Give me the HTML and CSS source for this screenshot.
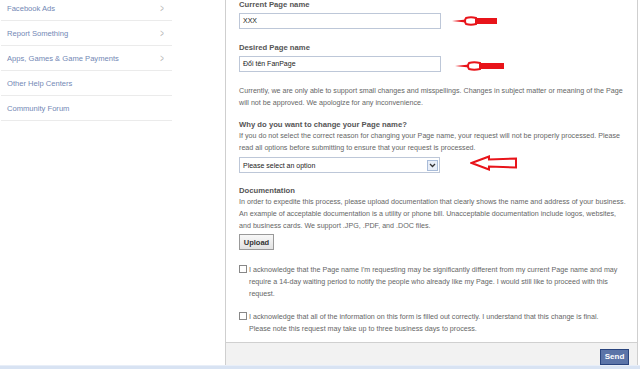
FILE: index.html
```html
<!DOCTYPE html>
<html>
<head>
<meta charset="utf-8">
<link rel="stylesheet" href="styles.css">
</head>
<body>
<div class="page">
  <aside class="sidebar">
    <ul class="nav">
      <li class="nav-item"><span>Facebook Ads</span><span class="chev">&gt;</span></li>
      <li class="nav-item"><span>Report Something</span><span class="chev">&gt;</span></li>
      <li class="nav-item"><span>Apps, Games &amp; Game Payments</span><span class="chev">&gt;</span></li>
      <li class="nav-item"><span>Other Help Centers</span></li>
      <li class="nav-item"><span>Community Forum</span></li>
    </ul>
  </aside>
  <main class="main">
    <form class="form">
      <div class="label">Current Page name</div>
      <div class="field">
        <div class="input">XXX</div>
        <svg class="arrow arrow-1" width="50" height="10" viewBox="0 0 50 10">
          <path d="M0 5 L14 3.5 L15 5 L14 6.5 Z" fill="#e8141a"/>
          <path d="M14 2 Q19 0.5 24 2 L24 8 Q19 9.5 14 8 Q12 5 14 2 Z" fill="#fff" stroke="#e8141a" stroke-width="2"/>
          <rect x="24" y="2" width="21" height="6" fill="#e8141a"/>
        </svg>
      </div>
      <div class="label label-gap">Desired Page name</div>
      <div class="field">
        <div class="input">Đổi tên FanPage</div>
        <svg class="arrow arrow-2" width="52" height="10" viewBox="0 0 52 10">
          <path d="M0 5 L14 3.5 L15 5 L14 6.5 Z" fill="#e8141a"/>
          <path d="M14 2 Q19 0.5 25 2 L25 8 Q19 9.5 14 8 Q12 5 14 2 Z" fill="#fff" stroke="#e8141a" stroke-width="2"/>
          <rect x="25" y="2" width="24" height="6" fill="#e8141a"/>
        </svg>
      </div>
      <p class="text p-gap">Currently, we are only able to support small changes and misspellings. Changes in subject matter or meaning of the Page will not be approved. We apologize for any inconvenience.</p>
      <div class="label label-gap2">Why do you want to change your Page name?</div>
      <p class="text">If you do not select the correct reason for changing your Page name, your request will not be properly processed. Please read all options before submitting to ensure that your request is processed.</p>
      <div class="field">
        <div class="select"><span>Please select an option</span><span class="sel-btn"><svg width="7" height="5" viewBox="0 0 7 5"><path d="M1 1 L3.5 3.5 L6 1" fill="none" stroke="#333" stroke-width="1.3"/></svg></span></div>
        <svg class="arrow arrow-3" width="50" height="18" viewBox="0 0 50 18">
          <path d="M1.5 8 L19 1.5 L19 4.5 L46 3.5 L46 12.5 L19 11.5 L19 14.5 Z" fill="#fff" stroke="#e8141a" stroke-width="2" stroke-linejoin="miter"/>
        </svg>
      </div>
      <div class="label label-gap3">Documentation</div>
      <p class="text">In order to expedite this process, please upload documentation that clearly shows the name and address of your business. An example of acceptable documentation is a utility or phone bill. Unacceptable documentation include logos, websites, and business cards. We support .JPG, .PDF, and .DOC files.</p>
      <button type="button" class="upload">Upload</button>
      <label class="check check-1"><span class="box"></span><span class="check-text">I acknowledge that the Page name I'm requesting may be significantly different from my current Page name and may require a 14-day waiting period to notify the people who already like my Page. I would still like to proceed with this request.</span></label>
      <label class="check check-2"><span class="box"></span><span class="check-text">I acknowledge that all of the information on this form is filled out correctly. I understand that this change is final. Please note this request may take up to three business days to process.</span></label>
    </form>
    <div class="footer"><button type="button" class="send">Send</button></div>
  </main>
  <div class="edge"></div>
</div>
<div class="strip"></div>
</body>
</html>
```

FILE: styles.css
```css
html, body {
  margin: 0;
  padding: 0;
  background: #fff;
  font-family: "Liberation Sans", Arial, sans-serif;
}
.page {
  display: flex;
  height: 365px;
}
.sidebar {
  width: 225px;
  flex: none;
}
.nav {
  list-style: none;
  margin: -4px 0 0 0;
  padding: 0 0 0 1px;
  width: 171px;
}
.nav-item {
  display: flex;
  justify-content: space-between;
  align-items: center;
  height: 24px;
  padding: 0 7px 0 6px;
  border-bottom: 1px solid #ebebeb;
  font-size: 7.6px;
  color: #7388b5;
}
.chev {
  color: #b5b5b5;
  font-size: 10px;
  transform: scaleX(0.6);
}
.main {
  width: 411px;
  flex: none;
  border-left: 1px solid #cfcfcf;
  border-right: 1px solid #cfcfcf;
  display: flex;
  flex-direction: column;
}
.edge {
  flex: 1;
}
.form {
  flex: 1;
  padding: 0 11px 0 13px;
}
.label {
  font-weight: bold;
  font-size: 7.7px;
  line-height: 10px;
  color: #555;
}
.label-gap { margin-top: 14px; }
.label-gap2 { margin-top: 11px; }
.label-gap3 { margin-top: 13px; }
.field {
  position: relative;
  margin-top: 3px;
}
.input {
  box-sizing: border-box;
  width: 202px;
  height: 16px;
  border: 1px solid #bdc7d8;
  padding: 0 3px;
  font-size: 7px;
  line-height: 14px;
  color: #222;
}
.text {
  margin: 0;
  font-size: 7.15px;
  line-height: 12px;
  color: #666;
}
.p-gap { margin-top: 13px; }
.select {
  box-sizing: border-box;
  width: 201px;
  height: 16px;
  border: 1px solid #bdc7d8;
  padding: 0 1px 0 3px;
  display: flex;
  align-items: center;
  justify-content: space-between;
  font-size: 7px;
  color: #222;
}
.sel-btn {
  box-sizing: border-box;
  width: 11px;
  height: 11px;
  border: 1px solid #a9bcd9;
  background: #e8eef8;
  display: flex;
  align-items: center;
  justify-content: center;
}
.arrow {
  position: absolute;
}
.arrow-1 { left: 213px; top: 3px; }
.arrow-2 { left: 216px; top: 5px; }
.arrow-3 { left: 231px; top: -2px; }
.upload {
  display: block;
  margin-top: 2px;
  box-sizing: border-box;
  width: 35px;
  height: 16px;
  padding: 0;
  border: 1px solid #999;
  background: linear-gradient(#f8f8f8, #e2e2e2);
  font-family: "Liberation Sans", Arial, sans-serif;
  font-weight: bold;
  font-size: 7.5px;
  color: #333;
}
.check {
  display: flex;
  align-items: flex-start;
  font-size: 7.15px;
  line-height: 12px;
  color: #666;
  padding-right: 4px;
}
.check-1 { margin-top: 14px; }
.check-2 { margin-top: 11px; }
.box {
  flex: none;
  box-sizing: border-box;
  width: 8px;
  height: 8px;
  border: 1px solid #888;
  margin: 1px 2px 0 0;
  background: #fff;
}
.footer {
  height: 22px;
  border-top: 1px solid #d0d0d0;
  background: #f2f2f2;
  display: flex;
  justify-content: flex-end;
  align-items: center;
  padding-right: 8px;
}
.send {
  box-sizing: border-box;
  width: 29px;
  height: 16px;
  padding: 0;
  margin-top: 5px;
  border: 1px solid #29447e;
  background: #5b74a8;
  color: #fff;
  font-family: "Liberation Sans", Arial, sans-serif;
  font-weight: bold;
  font-size: 8px;
}
.strip {
  height: 4px;
  background: #d8e3f3;
  border-top: 1px solid #e8eef8;
  box-sizing: border-box;
}
```
